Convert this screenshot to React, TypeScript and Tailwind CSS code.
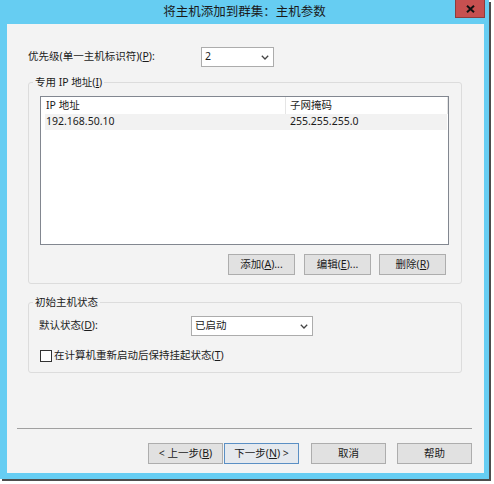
import React from "react";

const font = { fontFamily: '"Noto Sans", "Noto Sans CJK SC", sans-serif' };

function Chevron() {
  return (
    <svg width="8" height="5" viewBox="0 0 8 5" className="shrink-0">
      <path d="M0.8 0.8 L4 4 L7.2 0.8" fill="none" stroke="#444" strokeWidth="1.3" />
    </svg>
  );
}

function Btn({ children, w, cls = "" }: { children: React.ReactNode; w: string; cls?: string }) {
  return (
    <div
      className={`${w} h-[21px] shrink-0 flex items-center justify-center border border-[#adadad] bg-[#e1e1e1] ${cls}`}
    >
      {children}
    </div>
  );
}

export default function App() {
  return (
    <div className="w-[494px] h-[484px] bg-white text-[10.5px] text-[#1b1b1b]" style={font}>
      <div className="w-[489px] h-[479px] bg-[#66cdf2] flex flex-col shadow-[2px_2px_0_#4d4d4d]">
        {/* title bar */}
        <div className="relative h-[24px] shrink-0 flex items-center justify-center">
          <span className="text-[12.5px] text-[#1a1a1a] leading-none">将主机添加到群集：主机参数</span>
          <div className="absolute right-[4px] top-0 w-[30px] h-[18px] bg-[#c75050] border border-t-0 border-[#8d3d3d] flex items-center justify-center">
            <svg width="9" height="8" viewBox="0 0 9 8">
              <path d="M1 0.8 L8 7.2 M8 0.8 L1 7.2" stroke="#111" strokeWidth="2" />
            </svg>
          </div>
        </div>

        {/* content */}
        <div className="ml-[7px] mr-[5px] mb-[6px] flex-1 bg-[#f3f3f3] flex flex-col">
          <div className="mt-[23px] h-[20px] flex items-center">
            <div className="pl-[21px] w-[194px] shrink-0">
              优先级(单一主机标识符)(<u>P</u>):
            </div>
            <div className="w-[73px] h-[20px] bg-white border border-[#acacac] flex items-center justify-between pl-[3px] pr-[4px]">
              <span>2</span>
              <Chevron />
            </div>
          </div>

          {/* group 1 */}
          <fieldset className="mt-[8px] ml-[21px] w-[434px] border border-[#dcdcdc] rounded-[3px]">
            <legend className="ml-[4px] px-[2px] leading-[14px]">
              专用 IP 地址(<u>I</u>)
            </legend>
            <div className="pt-[7px] pl-[11px] pr-[12px] pb-[8px]">
              <div className="w-[409px] h-[149px] border border-[#828790] bg-white flex flex-col">
                <div className="h-[17px] flex items-center">
                  <div className="w-[244px] pl-[5px] h-full flex items-center">IP 地址</div>
                  <div className="flex-1 h-full border-l border-r border-[#e5e5e5] pl-[4px] flex items-center">
                    子网掩码
                  </div>
                </div>
                <div className="h-[16px] ml-[4px] mr-[1px] bg-[#f2f2f2] flex items-center">
                  <div className="w-[245px] pl-[1px]">192.168.50.10</div>
                  <div>255.255.255.0</div>
                </div>
              </div>
              <div className="mt-[9px] mr-[3px] flex justify-end">
                <Btn w="w-[67px]">
                  添加(<u>A</u>)...
                </Btn>
                <Btn w="w-[67px]" cls="ml-[9px]">
                  编辑(<u>E</u>)...
                </Btn>
                <Btn w="w-[67px]" cls="ml-[8px]">
                  删除(<u>R</u>)
                </Btn>
              </div>
            </div>
          </fieldset>

          {/* group 2 */}
          <fieldset className="mt-[11px] ml-[21px] w-[434px] border border-[#dcdcdc] rounded-[3px]">
            <legend className="ml-[4px] px-[2px] leading-[14px]">初始主机状态</legend>
            <div className="pt-[7px] pb-[10px]">
              <div className="h-[20px] flex items-center">
                <div className="pl-[10px] w-[162px] shrink-0">
                  默认状态(<u>D</u>):
                </div>
                <div className="w-[122px] h-[20px] bg-white border border-[#acacac] flex items-center justify-between pl-[3px] pr-[4px]">
                  <span>已启动</span>
                  <Chevron />
                </div>
              </div>
              <div className="mt-[13px] h-[13px] pl-[11px] flex items-center">
                <div className="w-[12px] h-[12px] border border-[#333] bg-white shrink-0" />
                <span className="ml-[2px]">
                  在计算机重新启动后保持挂起状态(<u>T</u>)
                </span>
              </div>
            </div>
          </fieldset>

          <div className="mt-[55px] ml-[10px] w-[455px] h-px bg-[#a0a0a0]" />

          <div className="mt-[14px] ml-[141px] flex">
            <Btn w="w-[75px]">&lt; 上一步(<u>B</u>)</Btn>
            <Btn w="w-[75px]" cls="ml-[1px] !border-[#5a8fc4] !bg-[#e5e9ee]">
              下一步(<u>N</u>) &gt;
            </Btn>
            <Btn w="w-[75px]" cls="ml-[12px]">取消</Btn>
            <Btn w="w-[75px]" cls="ml-[11px]">帮助</Btn>
          </div>
        </div>
      </div>
    </div>
  );
}
